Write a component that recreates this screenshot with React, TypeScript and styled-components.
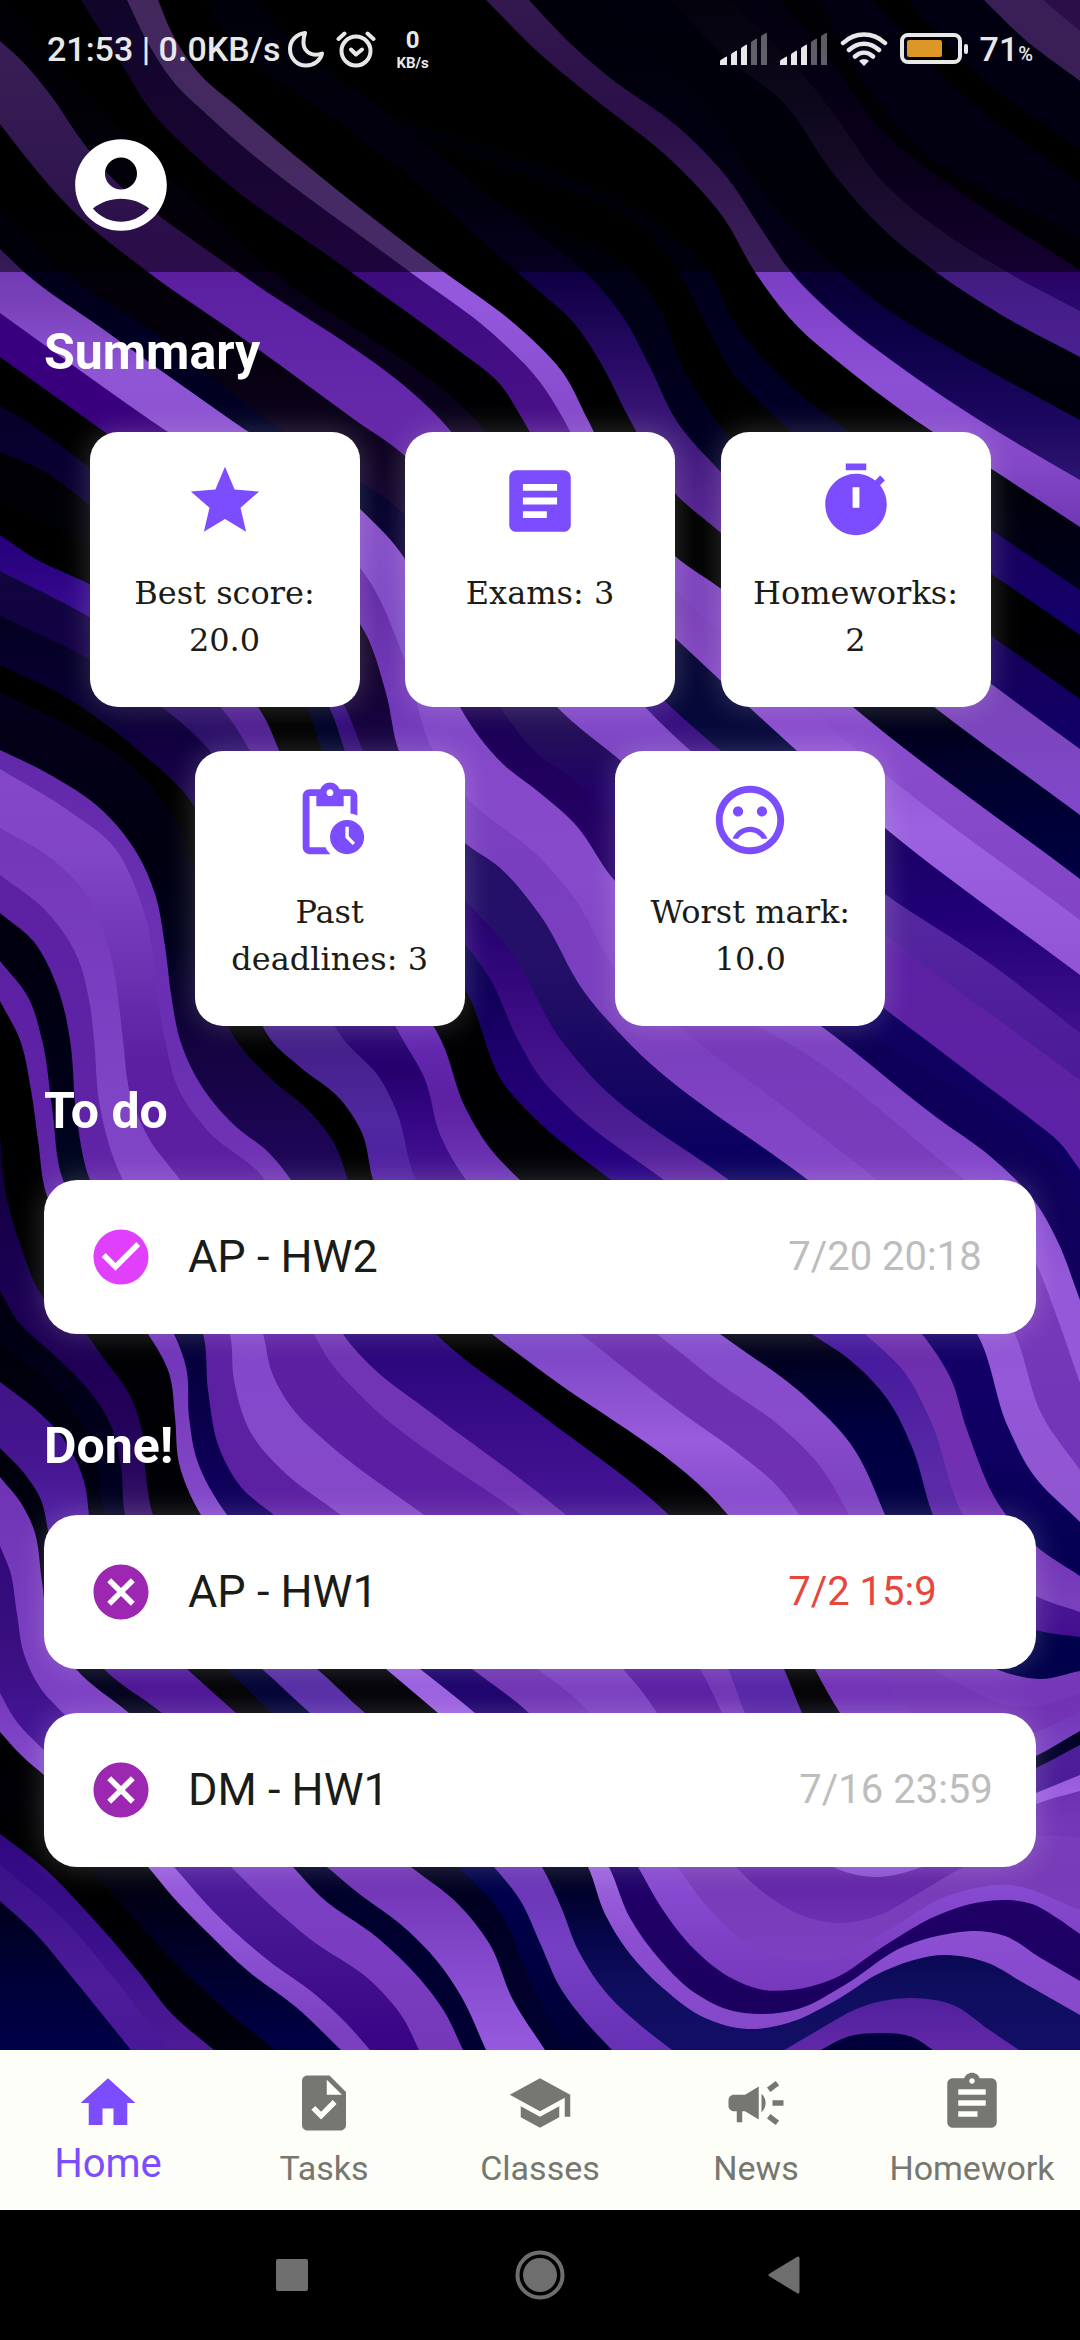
import React from "react";
import styled, { createGlobalStyle } from "styled-components";

const GlobalStyle = createGlobalStyle`
  *, *::before, *::after { box-sizing: border-box; }
  body { margin: 0; background: #000; font-family: Roboto, "Noto Sans", sans-serif; }
  button { font: inherit; border: 0; padding: 0; margin: 0; background: none; cursor: pointer; }
  h2, p, ul { margin: 0; padding: 0; }
`;

/* ---------- wallpaper ---------- */

type Point = [number, number];
type Stop = [number, string];
type Band = { edge: Point[]; shades: Stop[] };

/* Each band fills everything to the lower left of its edge; later bands cover earlier ones. */
const bands: Band[] = [
  { edge: [[1043, 0], [1080, 31]], shades: [[0, "#7a42b5"]] },
  { edge: [[984, 0], [1022, 37], [1080, 81]], shades: [[0, "#000024"]] },
  { edge: [[908, 0], [964, 63], [1080, 150]], shades: [[0, "#000004"]] },
  { edge: [[874, 0], [950, 83], [1080, 183]], shades: [[0, "#060022"]] },
  { edge: [[820, 0], [850, 60], [919, 147], [1080, 237]], shades: [[0, "#00000c"]] },
  { edge: [[780, 0], [822, 50], [884, 133], [953, 187], [1080, 270]], shades: [[0, "#080020"], [180, "#14003a"], [260, "#2c0060"], [310, "#280a70"]] },
  { edge: [[730, 0], [802, 73], [836, 117], [884, 183], [936, 227], [1007, 272], [1080, 311]], shades: [[0, "#08061c"], [100, "#1c1038"], [220, "#3c1c68"], [290, "#441c86"], [350, "#4a2090"]] },
  { edge: [[671, 0], [729, 60], [781, 100], [833, 173], [884, 230], [936, 272], [1005, 317], [1080, 357]], shades: [[0, "#00001a"], [420, "#00000c"]] },
  { edge: [[600, 0], [700, 100], [780, 215], [840, 272], [884, 307], [953, 350], [1080, 420]], shades: [[0, "#000014"], [270, "#080030"], [320, "#0a0042"], [420, "#1c0760"], [480, "#2c1570"]] },
  { edge: [[529, 0], [540, 12], [574, 47], [609, 77], [678, 127], [729, 180], [760, 227], [791, 272], [843, 323], [895, 363], [979, 420], [1080, 480]], shades: [[0, "#6a34a4"], [120, "#5a2096"], [220, "#7038b0"], [290, "#7d40c8"], [380, "#8c50d5"], [460, "#8448c8"], [527, "#7038b4"]] },
  { edge: [[486, 0], [540, 54], [592, 97], [674, 163], [723, 217], [755, 272], [798, 327], [836, 360], [915, 420], [990, 468], [1080, 527]], shades: [[0, "#000000"], [420, "#000000"], [600, "#00001c"]] },
  { edge: [[540, 165], [640, 212], [710, 272], [733, 320], [781, 377], [833, 420], [905, 470], [990, 529], [1080, 590]], shades: [[0, "#00000c"], [300, "#00001c"], [430, "#000028"], [540, "#18005c"], [620, "#14006a"]] },
  { edge: [[540, 180], [640, 225], [678, 272], [702, 317], [733, 373], [778, 420], [880, 500], [990, 573], [1080, 635]], shades: [[0, "#000000"], [600, "#000000"], [700, "#000008"]] },
  { edge: [[540, 222], [633, 272], [664, 317], [678, 357], [716, 420], [850, 535], [990, 635], [1080, 699]], shades: [[0, "#000010"], [300, "#000016"], [440, "#000022"], [640, "#160058"], [760, "#12006a"]] },
  { edge: [[255, 0], [296, 43], [379, 107], [540, 236], [585, 272], [623, 317], [650, 367], [676, 420], [720, 471], [860, 585], [990, 683], [1080, 749]], shades: [[0, "#020016"], [200, "#04001c"], [280, "#100046"], [370, "#2a0c68"], [430, "#3c1878"], [500, "#50208c"], [700, "#7a44ba"], [800, "#8048c8"]] },
  { edge: [[205, 0], [234, 50], [293, 90], [413, 180], [517, 272], [540, 292], [574, 323], [599, 360], [630, 420], [672, 490], [720, 532], [934, 707], [1080, 815]], shades: [[0, "#000000"], [560, "#000000"], [680, "#00000c"], [760, "#000028"], [880, "#000044"]] },
  { edge: [[158, 0], [172, 33], [196, 70], [241, 110], [444, 272], [510, 320], [540, 347], [561, 370], [588, 420], [630, 505], [675, 556], [720, 588], [853, 707], [1080, 879]], shades: [[0, "#8c54c4"], [150, "#9058cc"], [300, "#9458de"], [430, "#8448c8"], [600, "#7c44bc"], [740, "#884ccc"], [920, "#8244c4"]] },
  { edge: [[127, 0], [148, 43], [172, 80], [213, 120], [410, 272], [492, 333], [540, 382], [564, 420], [615, 530], [675, 590], [807, 707], [885, 774], [1080, 920]], shades: [[0, "#240c58"], [150, "#340c68"], [300, "#3e0c80"], [410, "#481088"], [600, "#7840b4"], [720, "#884ccc"], [830, "#9c62e0"], [960, "#9255d6"]] },
  { edge: [[81, 0], [127, 73], [148, 107], [200, 160], [351, 272], [458, 350], [499, 383], [523, 420], [590, 560], [675, 638], [749, 707], [885, 828], [1080, 975]], shades: [[0, "#000000"], [440, "#000004"], [640, "#080834"], [740, "#06083c"], [830, "#180062"], [920, "#220078"], [1030, "#40108c"]] },
  { edge: [[60, 70], [275, 273], [475, 420], [590, 610], [671, 707], [721, 751], [885, 894], [988, 962], [1080, 1033]], shades: [[0, "#04000c"], [420, "#0a001c"], [700, "#381080"], [800, "#421488"], [900, "#5528a0"], [1060, "#4c1b98"]] },
  { edge: [[0, 41], [21, 60], [52, 97], [79, 137], [117, 183], [158, 215], [238, 272], [441, 420], [560, 600], [645, 707], [740, 795], [885, 934], [1026, 1040], [1080, 1080]], shades: [[40, "#7440b0"], [150, "#6a34a8"], [250, "#581c98"], [290, "#5c20a3"], [400, "#6428aa"], [450, "#6428a8"], [720, "#8048c8"], [820, "#7540b8"], [960, "#5c20a3"], [1170, "#5e22a6"]] },
  { edge: [[0, 124], [28, 160], [69, 207], [148, 272], [241, 337], [355, 420], [405, 456], [475, 560], [557, 707], [621, 761], [740, 870], [885, 1009], [926, 1040], [988, 1087], [1032, 1120], [1060, 1143], [1080, 1170]], shades: [[120, "#000000"], [350, "#04000c"], [460, "#100424"], [600, "#180640"], [730, "#241058"], [800, "#200068"], [1000, "#100060"], [1250, "#0e0060"]] },
  { edge: [[0, 207], [65, 272], [155, 333], [258, 413], [360, 481], [405, 515], [455, 620], [500, 707], [540, 756], [574, 780], [615, 823], [740, 920], [880, 1040], [990, 1110], [1060, 1170], [1080, 1210]], shades: [[200, "#00000e"], [330, "#000020"], [480, "#000028"], [600, "#14003c"], [740, "#1d0058"], [860, "#270068"], [1050, "#0e0058"], [1300, "#10005c"]] },
  { edge: [[0, 249], [24, 272], [100, 327], [231, 420], [360, 509], [405, 559], [435, 640], [460, 707], [503, 764], [540, 793], [574, 823], [615, 881], [700, 945], [821, 1026], [936, 1117], [991, 1157], [1036, 1203], [1057, 1240], [1080, 1300]], shades: [[250, "#6c34b0"], [300, "#7840b8"], [370, "#8f55d5"], [520, "#8850c8"], [650, "#7a48c4"], [760, "#8448c8"], [880, "#864acb"], [1010, "#7b42c0"], [1100, "#7f44c5"], [1180, "#8448cc"], [1280, "#9458d8"]] },
  { edge: [[0, 313], [150, 420], [270, 500], [360, 568], [405, 661], [433, 751], [465, 796], [540, 858], [574, 898], [615, 968], [700, 1000], [783, 1040], [965, 1180], [1010, 1215], [1036, 1263], [1057, 1317], [1080, 1383]], shades: [[1000, "#7538b8"], [1180, "#7a3ebc"], [1400, "#7436b8"]] },
  { edge: [[0, 313], [150, 420], [270, 500], [360, 568], [405, 661], [433, 751], [465, 796], [540, 858], [574, 898], [615, 968], [695, 1040], [780, 1104], [877, 1180], [970, 1255], [1015, 1334], [1043, 1417], [1080, 1470]], shades: [[310, "#380080"], [420, "#38007c"], [570, "#6028a4"], [700, "#7038b8"], [780, "#7840c0"], [900, "#7a3ec0"], [1060, "#7b40be"], [1120, "#8044c4"], [1200, "#8448c8"], [1380, "#9458d8"], [1500, "#9055d0"]] },
  { edge: [[0, 357], [88, 420], [200, 500], [300, 570], [360, 624], [386, 693], [399, 751], [430, 805], [465, 843], [499, 867], [540, 915], [585, 993], [626, 1040], [808, 1180], [900, 1250], [977, 1334], [1008, 1427], [1032, 1473], [1080, 1522]], shades: [[350, "#000000"], [520, "#000004"], [660, "#14042c"], [760, "#180248"], [870, "#241068"], [960, "#241068"], [1060, "#180862"], [1160, "#0a0060"], [1350, "#140068"], [1460, "#0e0060"], [1540, "#060054"]] },
  { edge: [[0, 406], [24, 420], [89, 467], [240, 600], [345, 707], [363, 751], [410, 840], [465, 900], [510, 950], [561, 1040], [592, 1077], [729, 1180], [840, 1260], [922, 1334], [950, 1377], [967, 1430], [1006, 1515], [1036, 1546], [1080, 1576]], shades: [[410, "#06002a"], [500, "#0c0034"], [700, "#38107c"], [760, "#300c74"], [910, "#22006c"], [1020, "#3c0c85"], [1130, "#4c1f95"], [1180, "#6028a4"], [1400, "#7030b0"], [1540, "#7030b4"], [1600, "#7840bc"]] },
  { edge: [[0, 452], [45, 472], [89, 505], [230, 620], [329, 707], [345, 751], [395, 870], [465, 944], [489, 977], [518, 1040], [540, 1077], [568, 1107], [664, 1180], [780, 1265], [865, 1334], [905, 1373], [929, 1417], [963, 1515], [1000, 1570], [1036, 1596], [1080, 1612]], shades: [[450, "#000004"], [600, "#00000c"], [730, "#000228"], [930, "#08084c"], [1000, "#12005c"], [1070, "#200070"], [1160, "#240080"], [1340, "#44189c"], [1480, "#5a2aa8"], [1630, "#441090"]] },
  { edge: [[0, 500], [89, 545], [220, 630], [306, 707], [322, 751], [380, 890], [465, 989], [506, 1087], [540, 1123], [611, 1180], [720, 1260], [812, 1334], [850, 1360], [888, 1400], [912, 1447], [933, 1515], [975, 1595], [1036, 1630], [1080, 1637]], shades: [[490, "#000000"], [1130, "#000004"], [1340, "#000018"], [1430, "#000040"], [1600, "#00004a"], [1680, "#00004c"]] },
  { edge: [[0, 535], [34, 558], [89, 584], [190, 650], [258, 707], [285, 765], [340, 900], [410, 990], [441, 1040], [465, 1107], [489, 1147], [520, 1180], [620, 1260], [720, 1334], [809, 1400], [850, 1443], [885, 1515], [915, 1600], [955, 1645], [996, 1669], [1039, 1679], [1080, 1671]], shades: [[535, "#240078"], [600, "#34088c"], [720, "#502090"], [900, "#5420a0"], [1040, "#6428b0"], [1100, "#5c20a3"], [1170, "#6c34b4"], [1340, "#844ccc"], [1420, "#884ccc"], [1510, "#7a40c0"], [1700, "#7638b8"]] },
  { edge: [[0, 571], [89, 617], [160, 665], [220, 707], [255, 760], [300, 880], [370, 980], [403, 1040], [424, 1077], [441, 1137], [466, 1180], [560, 1262], [657, 1334], [719, 1383], [781, 1427], [815, 1460], [849, 1515], [885, 1610], [933, 1669], [970, 1689], [1005, 1705], [1029, 1707], [1080, 1693]], shades: [[571, "#10063c"], [660, "#140048"], [720, "#2c1068"], [1000, "#34107c"], [1070, "#26006c"], [1130, "#38088a"], [1178, "#441490"], [1340, "#6c30b0"], [1500, "#7030b4"], [1720, "#7234b4"]] },
  { edge: [[0, 616], [89, 659], [162, 707], [215, 757], [260, 880], [310, 980], [344, 1040], [379, 1077], [396, 1110], [416, 1180], [480, 1255], [581, 1334], [678, 1410], [747, 1460], [778, 1487], [799, 1515], [835, 1600], [874, 1669], [930, 1725], [980, 1745], [1036, 1732], [1080, 1711]], shades: [[616, "#030020"], [690, "#080030"], [760, "#140044"], [940, "#301868"], [1050, "#44208a"], [1120, "#5028a0"], [1180, "#5020a0"], [1340, "#7a44c4"], [1440, "#985cdc"], [1510, "#8448cc"], [1690, "#7030b4"], [1740, "#7840c0"]] },
  { edge: [[0, 665], [62, 695], [138, 750], [190, 800], [230, 920], [255, 1010], [271, 1040], [300, 1067], [341, 1100], [362, 1133], [373, 1180], [410, 1262], [492, 1334], [540, 1370], [728, 1515], [785, 1600], [815, 1669], [840, 1713], [890, 1780], [940, 1790], [1036, 1756], [1080, 1731]], shades: [[660, "#000000"], [1700, "#000004"], [1750, "#04042c"]] },
  { edge: [[0, 693], [52, 717], [138, 772], [172, 815], [194, 867], [210, 960], [236, 1040], [269, 1077], [310, 1112], [334, 1143], [348, 1180], [378, 1265], [436, 1334], [540, 1414], [669, 1515], [745, 1600], [784, 1669], [802, 1713], [850, 1795], [920, 1810], [1036, 1768], [1080, 1745]], shades: [[690, "#05001c"], [850, "#000010"], [940, "#00001c"], [1050, "#140340"], [1160, "#1e0658"], [1340, "#280678"], [1420, "#380c88"], [1510, "#441494"], [1690, "#5624a8"], [1790, "#4a1c94"]] },
  { edge: [[0, 750], [45, 772], [103, 811], [138, 855], [155, 894], [165, 946], [172, 1001], [180, 1040], [196, 1077], [234, 1125], [269, 1153], [291, 1180], [318, 1262], [343, 1334], [372, 1367], [430, 1412], [540, 1494], [566, 1515], [665, 1590], [728, 1669], [745, 1713], [800, 1800], [870, 1840], [940, 1838], [1036, 1793], [1080, 1775]], shades: [[750, "#6228aa"], [900, "#6a30b2"], [1050, "#6a2eb2"], [1170, "#7034b4"], [1400, "#7034b4"], [1700, "#7034b4"], [1790, "#9c60e0"], [1880, "#8a50d0"]] },
  { edge: [[0, 769], [69, 811], [114, 847], [138, 894], [152, 946], [157, 993], [165, 1040], [179, 1090], [207, 1130], [265, 1180], [290, 1262], [314, 1334], [331, 1363], [358, 1393], [522, 1515], [625, 1590], [700, 1669], [722, 1713], [765, 1805], [833, 1867], [857, 1875], [877, 1877], [922, 1867], [985, 1832], [1036, 1804], [1080, 1791]], shades: [[769, "#8547cb"], [860, "#8044c6"], [980, "#6a30b0"], [1060, "#5c1fa2"], [1450, "#5c1fa3"], [1700, "#5a1ea2"], [1830, "#7438b8"], [1880, "#6024a6"], [1920, "#6e30b2"]] },
  { edge: [[0, 828], [52, 859], [86, 894], [107, 942], [120, 1013], [123, 1040], [131, 1097], [148, 1137], [180, 1180], [230, 1260], [263, 1334], [272, 1373], [296, 1413], [324, 1440], [424, 1515], [540, 1600], [623, 1669], [657, 1713], [690, 1800], [736, 1867], [774, 1900], [809, 1918], [840, 1923], [877, 1916], [919, 1893], [963, 1867], [1036, 1836], [1080, 1837]], shades: [[828, "#7336b8"], [1000, "#7a3ec2"], [1110, "#8044c6"], [1180, "#8044c6"], [1400, "#8448cc"], [1510, "#8448c8"], [1690, "#7a40c0"], [1880, "#783cb8"], [1960, "#7c40c0"]] },
  { edge: [[0, 875], [45, 910], [76, 954], [90, 1005], [94, 1040], [100, 1107], [123, 1180], [190, 1260], [230, 1334], [234, 1380], [251, 1433], [282, 1470], [341, 1515], [450, 1600], [538, 1669], [590, 1713], [630, 1790], [678, 1867], [705, 1904], [747, 1943], [781, 1957], [822, 1961], [880, 1935], [950, 1895], [1010, 1885], [1080, 1910]], shades: [[875, "#5c20a3"], [1180, "#6024a6"], [1340, "#5c20a3"], [1500, "#5c20a3"], [1700, "#7034b4"], [1890, "#864ad0"], [1990, "#7638bc"]] },
  { edge: [[0, 913], [34, 942], [55, 981], [65, 1013], [70, 1040], [77, 1120], [90, 1180], [155, 1260], [203, 1334], [208, 1390], [220, 1450], [241, 1487], [274, 1515], [380, 1600], [472, 1669], [529, 1713], [590, 1790], [638, 1867], [661, 1907], [695, 1950], [733, 1979], [764, 1990], [791, 1990], [833, 1979], [884, 1946], [936, 1916], [981, 1902], [1008, 1900], [1032, 1904], [1057, 1918], [1080, 1934]], shades: [[913, "#00000e"], [1100, "#000018"], [1180, "#000824"], [1340, "#040038"], [1420, "#0a004c"], [1510, "#120060"], [1700, "#1c006c"], [1880, "#200068"], [2000, "#1c0060"]] },
  { edge: [[0, 961], [28, 997], [42, 1040], [52, 1107], [63, 1180], [120, 1260], [174, 1334], [186, 1367], [189, 1417], [196, 1457], [227, 1515], [330, 1600], [420, 1669], [475, 1713], [550, 1782], [609, 1867], [630, 1918], [661, 1961], [695, 1993], [733, 2011], [760, 2014], [798, 2009], [843, 1986], [905, 1946], [953, 1933], [974, 1931], [1005, 1936], [1039, 1957], [1080, 1981]], shades: [[961, "#5c20a3"], [1100, "#5f22a6"], [1180, "#6028a8"], [1340, "#7034b8"], [1440, "#7c40c0"], [1510, "#844acc"], [1690, "#9a60e0"], [1880, "#9a60dc"], [1950, "#8a4cd0"], [2030, "#8448c8"]] },
  { edge: [[0, 1001], [20, 1040], [31, 1090], [38, 1140], [46, 1193], [90, 1270], [148, 1334], [169, 1373], [175, 1417], [179, 1463], [201, 1515], [300, 1600], [386, 1669], [438, 1713], [520, 1782], [588, 1867], [605, 1914], [630, 1954], [664, 1989], [705, 2018], [747, 2029], [788, 2023], [833, 2002], [884, 1971], [946, 1955], [988, 1963], [1022, 1982], [1080, 2015]], shades: [[1000, "#000000"], [1720, "#000008"], [1880, "#000024"], [1940, "#06064c"], [1990, "#100e60"], [2050, "#120e66"]] },
  { edge: [[0, 1137], [5, 1190], [21, 1247], [43, 1297], [86, 1334], [107, 1363], [127, 1390], [141, 1427], [145, 1467], [153, 1515], [225, 1600], [317, 1669], [365, 1713], [470, 1792], [542, 1867], [561, 1907], [578, 1950], [609, 1996], [640, 2025], [672, 2050]], shades: [[1137, "#100038"], [1260, "#1a0050"], [1400, "#220058"], [1470, "#28085e"], [1515, "#381468"], [1690, "#562ca5"], [1870, "#6834b4"], [1950, "#7540c4"], [2050, "#6630b4"]] },
  { edge: [[0, 1290], [17, 1320], [52, 1353], [86, 1387], [110, 1423], [121, 1467], [125, 1515], [170, 1600], [262, 1669], [310, 1713], [425, 1800], [494, 1867], [520, 1900], [540, 1943], [561, 1989], [585, 2021], [612, 2050]], shades: [[1290, "#000010"], [1450, "#00001e"], [1690, "#000034"], [1900, "#00004c"], [2050, "#000034"]] },
  { edge: [[0, 1340], [50, 1385], [90, 1435], [105, 1515], [140, 1600], [226, 1669], [272, 1713], [390, 1805], [458, 1867], [500, 1912], [530, 1980], [565, 2050]], shades: [[1340, "#00000c"], [1520, "#000014"], [1690, "#000004"], [1870, "#000020"], [2000, "#00002c"]] },
  { edge: [[0, 1382], [34, 1408], [59, 1433], [76, 1460], [86, 1490], [89, 1515], [115, 1600], [187, 1669], [236, 1713], [335, 1805], [411, 1867], [458, 1904], [489, 1943], [513, 2000], [545, 2050]], shades: [[1382, "#401488"], [1460, "#451690"], [1515, "#5020a0"], [1690, "#4c1494"], [1880, "#7034b4"], [1960, "#8448cc"], [2040, "#9458dc"]] },
  { edge: [[0, 1448], [24, 1473], [41, 1500], [48, 1530], [62, 1610], [104, 1669], [162, 1713], [265, 1812], [327, 1867], [362, 1896], [399, 1923], [437, 1961], [461, 1996], [486, 2050]], shades: [[1448, "#00000c"], [1690, "#00001c"], [1880, "#00002c"], [2050, "#000034"]] },
  { edge: [[0, 1477], [21, 1503], [33, 1527], [42, 1582], [50, 1630], [76, 1669], [129, 1713], [230, 1805], [293, 1867], [320, 1896], [379, 1939], [420, 1979], [444, 2011], [463, 2050]], shades: [[1477, "#6e34b4"], [1560, "#7438ba"], [1690, "#7c40c4"], [1880, "#7a40c4"], [1970, "#7a3cc0"], [2050, "#7438b8"]] },
  { edge: [[0, 1546], [10, 1571], [17, 1614], [24, 1654], [41, 1689], [64, 1714], [150, 1792], [231, 1867], [269, 1904], [310, 1939], [372, 1982], [403, 2018], [419, 2050]], shades: [[1546, "#300878"], [1650, "#3a1080"], [1720, "#421494"], [1870, "#4e1c9c"], [1950, "#441490"], [2040, "#3a0486"]] },
  { edge: [[0, 1693], [14, 1718], [44, 1750], [110, 1802], [174, 1867], [213, 1911], [269, 1961], [317, 1996], [348, 2025], [370, 2050]], shades: [[1693, "#7438bc"], [1770, "#844acc"], [1870, "#985cdc"], [1930, "#9055d8"], [2030, "#7a40c0"]] },
  { edge: [[0, 1732], [21, 1755], [44, 1775], [98, 1820], [148, 1867], [172, 1896], [207, 1932], [248, 1971], [296, 2007], [341, 2050]], shades: [[1732, "#000000"], [1870, "#00000c"], [1930, "#000020"], [2040, "#000044"]] },
  { edge: [[0, 1780], [90, 1870], [172, 1960], [220, 2005], [275, 2050]], shades: [[1780, "#000006"], [1880, "#000000"], [2050, "#00000e"]] },
  { edge: [[0, 1834], [44, 1868], [86, 1911], [138, 1971], [172, 2014], [214, 2050]], shades: [[1834, "#300880"], [1950, "#3c108c"], [2040, "#4c1a94"]] },
  { edge: [[0, 1864], [69, 1925], [117, 1982], [169, 2050]], shades: [[1864, "#3a1088"], [1980, "#4c1c9a"], [2050, "#481898"]] },
  { edge: [[0, 1901], [34, 1932], [76, 1982], [131, 2050]], shades: [[1901, "#00001c"], [1980, "#000038"], [2050, "#000048"]] },
];

const crests: Band[] = [
  { edge: [[781, 2052], [815, 2032], [867, 2005], [912, 1998], [953, 2005], [988, 2029], [1022, 2052]], shades: [[1998, "#52209c"], [2050, "#6028a8"]] },
  { edge: [[817, 2052], [850, 2036], [879, 2033], [912, 2037], [936, 2052]], shades: [[2030, "#00003a"]] },
];

const distance = (a: Point, b: Point) => Math.hypot(b[0] - a[0], b[1] - a[1]);

/* Tangents are weighted by the distance to each neighbour, so uneven spacing stays free of ripples. */
const tangent = (points: Point[], i: number): Point => {
  const here = points[i];
  const before = points[i - 1];
  const after = points[i + 1];
  if (!before || !after) {
    const [a, b] = before ? [before, here] : [here, after];
    const d = distance(a, b);
    return [(b[0] - a[0]) / d, (b[1] - a[1]) / d];
  }
  const d1 = distance(before, here);
  const d2 = distance(here, after);
  const mix = (k: 0 | 1) =>
    (d2 * ((here[k] - before[k]) / d1) + d1 * ((after[k] - here[k]) / d2)) / (d1 + d2);
  return [mix(0), mix(1)];
};

const smooth = (points: Point[]) => {
  let d = `M${points[0][0]} ${points[0][1]}`;
  for (let i = 0; i < points.length - 1; i++) {
    const from = points[i];
    const to = points[i + 1];
    const reach = distance(from, to) / 3;
    const t1 = tangent(points, i);
    const t2 = tangent(points, i + 1);
    const c = [from[0] + t1[0] * reach, from[1] + t1[1] * reach, to[0] - t2[0] * reach, to[1] - t2[1] * reach];
    d += `C${c.map((v) => v.toFixed(1)).join(" ")} ${to[0]} ${to[1]}`;
  }
  return d;
};

const WallpaperArt = styled.svg`
  position: absolute;
  inset: 0;
  z-index: 0;
  width: 100%;
  height: 100%;
`;

const Shade = ({ id, shades }: { id: string; shades: Stop[] }) => {
  const top = shades[0][0];
  const bottom = Math.max(shades[shades.length - 1][0], top + 1);
  return (
    <linearGradient id={id} gradientUnits="userSpaceOnUse" x1="0" x2="0" y1={top} y2={bottom}>
      {shades.map(([y, color]) => (
        <stop key={y} offset={(y - top) / (bottom - top)} stopColor={color} />
      ))}
    </linearGradient>
  );
};

const Wallpaper = () => (
  <WallpaperArt viewBox="0 0 1080 2050" preserveAspectRatio="xMidYMin slice" aria-hidden="true">
    <defs>
      {bands.map((band, i) => <Shade key={i} id={`band-${i}`} shades={band.shades} />)}
      {crests.map((band, i) => <Shade key={i} id={`crest-${i}`} shades={band.shades} />)}
    </defs>
    <rect width="1080" height="2050" fill="#5a1f95" />
    {bands.map((band, i) => (
      <path key={i} d={`${smooth(band.edge)}h20V2100H-20V-20Z`} fill={`url(#band-${i})`} />
    ))}
    {crests.map((band, i) => (
      <path key={i} d={`${smooth(band.edge)}Z`} fill={`url(#crest-${i})`} />
    ))}
  </WallpaperArt>
);

/* ---------- icons ---------- */

const glyphs = {
  account: "M12 2C6.48 2 2 6.48 2 12s4.48 10 10 10 10-4.48 10-10S17.52 2 12 2zm0 4c1.93 0 3.5 1.57 3.5 3.5S13.93 13 12 13s-3.5-1.57-3.5-3.5S10.07 6 12 6zm0 14c-2.03 0-4.43-.82-6.14-2.88C7.55 15.8 9.68 15 12 15s4.45.8 6.14 2.12C16.43 19.18 14.03 20 12 20z",
  star: "M12 17.27 18.18 21l-1.64-7.03L22 9.24l-7.19-.61L12 2 9.19 8.63 2 9.24l5.46 4.73L5.82 21z",
  article: "M19 3H5c-1.1 0-2 .9-2 2v14c0 1.1.9 2 2 2h14c1.1 0 2-.9 2-2V5c0-1.1-.9-2-2-2zm-5 14H7v-2h7v2zm3-4H7v-2h10v2zm0-4H7V7h10v2z",
  timer: "M9 1h6v2H9zM19.03 7.39l1.42-1.42c-.43-.51-.9-.99-1.41-1.41l-1.42 1.42C16.07 4.74 14.12 4 12 4c-4.97 0-9 4.03-9 9s4.02 9 9 9 9-4.03 9-9c0-2.12-.74-4.07-1.97-5.61zM13 14h-2V8h2v6z",
  pending: "M17 12c-2.76 0-5 2.24-5 5s2.24 5 5 5 5-2.24 5-5-2.24-5-5-5zm1.65 7.35L16.5 17.2V14h1v2.79l1.85 1.85-.7.71zM18 3h-3.18C14.4 1.84 13.3 1 12 1s-2.4.84-2.82 2H6c-1.1 0-2 .9-2 2v15c0 1.1.9 2 2 2h6.11c-.59-.57-1.07-1.25-1.42-2H6V5h2v3h8V5h2v5.08c.71.1 1.38.31 2 .6V5c0-1.1-.9-2-2-2zm-6 2c-.55 0-1-.45-1-1s.45-1 1-1 1 .45 1 1-.45 1-1 1z",
  sad: "M15.5 8a1.5 1.5 0 1 0 0 3 1.5 1.5 0 0 0 0-3zM8.5 8a1.5 1.5 0 1 0 0 3 1.5 1.5 0 0 0 0-3zM12 14c-2.33 0-4.32 1.45-5.12 3.5h1.67c.69-1.19 1.97-2 3.45-2s2.75.81 3.45 2h1.67c-.8-2.05-2.79-3.5-5.12-3.5zm-.01-12C6.47 2 2 6.48 2 12s4.47 10 9.99 10C17.52 22 22 17.52 22 12S17.52 2 11.99 2zM12 20c-4.42 0-8-3.58-8-8s3.58-8 8-8 8 3.58 8 8-3.58 8-8 8z",
  check: "M12 2C6.48 2 2 6.48 2 12s4.48 10 10 10 10-4.48 10-10S17.52 2 12 2zm-2 15-5-5 1.41-1.41L10 14.17l7.59-7.59L19 8l-9 9z",
  cancel: "M12 2C6.47 2 2 6.47 2 12s4.47 10 10 10 10-4.47 10-10S17.53 2 12 2zm5 13.59L15.59 17 12 13.41 8.41 17 7 15.59 10.59 12 7 8.41 8.41 7 12 10.59 15.59 7 17 8.41 13.41 12 17 15.59z",
  home: "M10 20v-6h4v6h5v-8h3L12 3 2 12h3v8z",
  task: "M14 2H6c-1.1 0-2 .9-2 2v16c0 1.1.89 2 1.99 2H18c1.1 0 2-.9 2-2V8l-6-6zm-3.06 16L7.4 14.46l1.41-1.41 2.12 2.12 4.24-4.24 1.41 1.41L10.94 18zM13 9V3.5L18.5 9H13z",
  school: "M5 13.18v4L12 21l7-3.82v-4L12 17l-7-3.82zM12 3 1 9l11 6 9-4.91V17h2V9L12 3z",
  campaign: "M18 11v2h4v-2h-4zM16 17.61c.96.71 2.21 1.65 3.2 2.39.4-.53.8-1.07 1.2-1.6-.99-.74-2.24-1.68-3.2-2.4-.4.54-.8 1.08-1.2 1.61zM20.4 5.6c-.4-.53-.8-1.07-1.2-1.6-.99.74-2.24 1.68-3.2 2.4.4.53.8 1.07 1.2 1.6.96-.72 2.21-1.65 3.2-2.4zM4 9c-1.1 0-2 .9-2 2v2c0 1.1.9 2 2 2h1v4h2v-4h1l5 3V6L8 9H4zM15.5 12c0-1.33-.58-2.53-1.5-3.35v6.69c.92-.81 1.5-2.01 1.5-3.34z",
  assignment: "M19 3h-4.18C14.4 1.84 13.3 1 12 1s-2.4.84-2.82 2H5c-1.1 0-2 .9-2 2v14c0 1.1.9 2 2 2h14c1.1 0 2-.9 2-2V5c0-1.1-.9-2-2-2zm-7 0c.55 0 1 .45 1 1s-.45 1-1 1-1-.45-1-1 .45-1 1-1zm2 14H7v-2h7v2zm3-4H7v-2h10v2zm0-4H7V7h10v2z",
};

type GlyphName = keyof typeof glyphs;

const IconSvg = styled.svg<{ $size: number; $color?: string }>`
  display: block;
  flex: none;
  width: ${(p) => p.$size}px;
  height: ${(p) => p.$size}px;
  fill: ${(p) => p.$color ?? "currentColor"};
`;

const Icon = ({ name, size, color }: { name: GlyphName; size: number; color?: string }) => (
  <IconSvg viewBox="0 0 24 24" $size={size} $color={color} aria-hidden="true">
    <path d={glyphs[name]} fillRule="evenodd" />
  </IconSvg>
);

/* ---------- status bar ---------- */

const StatusRow = styled.div`
  display: flex;
  align-items: center;
  justify-content: space-between;
  height: 98px;
  padding: 0 47px;
  color: #e8e8e8;
`;

const StatusGroup = styled.div`
  display: flex;
  align-items: center;
  gap: 12px;
`;

const StatusText = styled.span`
  font-size: 34px;
  line-height: 40px;
  font-weight: 500;
`;

const Clock = styled(StatusText)`
  margin-right: -4px;
`;

const Speed = styled.span`
  display: flex;
  flex-direction: column;
  align-items: center;
  margin-left: 8px;
  font-weight: 700;
`;

const SpeedValue = styled.span`
  font-size: 24px;
  line-height: 28px;
`;

const SpeedUnit = styled.span`
  font-size: 15px;
  line-height: 18px;
`;

const Percent = styled.small`
  font-size: 20px;
  line-height: 20px;
  font-weight: 500;
`;

const StatusArt = styled.svg`
  display: block;
  flex: none;
`;

const Signal = () => (
  <StatusArt width="48" height="32" viewBox="0 0 48 32" fill="#e8e8e8" aria-hidden="true">
    <path d="M0 32v-3.500q0-1 1-1.800l5-3q1-.7 1 .5V32z" />
    <path d="M11 32V22q0-1 1-1.700l4-2.500q1-.6 1 .5V32z" />
    <path d="M21 32V16q0-1 1-1.700l4-2.500q1-.6 1 .5V32z" />
    <path d="M31 32V10q0-1 1-1.700l4-2.500q1-.6 1 .5V32z" opacity=".4" />
    <path d="M41 32V4q0-1 1-1.700l4-2.200q1-.6 1 .5V32z" opacity=".4" />
  </StatusArt>
);

const StatusBar = () => (
  <StatusRow>
    <StatusGroup>
      <Clock>21:53 | 0.0KB/s</Clock>
      <StatusArt width="36" height="38" viewBox="0 0 36 38" fill="none" stroke="#e8e8e8" strokeWidth="4" strokeLinejoin="round" aria-hidden="true">
        <path d="M17 3C8 4 2 11 2 19c0 9.500 7 16.500 16 16.500 8 0 14.500-5 16-12-9 3.500-18-1-18.500-10-.2-4 .5-7.500 1.500-10.500z" />
      </StatusArt>
      <StatusArt width="40" height="38" viewBox="0 0 40 38" fill="none" stroke="#e8e8e8" strokeWidth="4" strokeLinecap="round" strokeLinejoin="round" aria-hidden="true">
        <circle cx="20" cy="21" r="14.500" />
        <path d="M15 19.500l5 5 6-5M2.500 9l6-5.500M37.500 9l-6-5.500" />
      </StatusArt>
      <Speed>
        <SpeedValue>0</SpeedValue>
        <SpeedUnit>KB/s</SpeedUnit>
      </Speed>
    </StatusGroup>
    <StatusGroup>
      <Signal />
      <Signal />
      <StatusArt width="48" height="36" viewBox="0 0 48 36" fill="none" stroke="#e8e8e8" strokeWidth="4.500" strokeLinecap="round" aria-hidden="true">
        <path d="M3 12c12-11.500 30-11.500 42 0M9 19c9-8.500 21-8.500 30 0M15 25.500c5.500-5 12.500-5 18 0" />
        <path d="M24 35l-5-5c2.500-2.700 7.500-2.700 10 0z" fill="#e8e8e8" stroke="none" />
      </StatusArt>
      <StatusArt width="68" height="32" viewBox="0 0 68 32" aria-hidden="true">
        <rect x="2" y="2" width="58" height="27" rx="6" fill="none" stroke="#e8e8e8" strokeWidth="4" />
        <rect x="7" y="7" width="35" height="17" rx="2" fill="#dc9726" />
        <rect x="64" y="11" width="4" height="10" rx="2" fill="#e8e8e8" />
      </StatusArt>
      <StatusText>71<Percent>%</Percent></StatusText>
    </StatusGroup>
  </StatusRow>
);

/* ---------- page ---------- */

const Page = styled.div`
  display: flex;
  flex-direction: column;
  min-height: 100vh;
`;

const Screen = styled.div`
  position: relative;
  flex: 1;
  overflow: hidden;
`;

const Content = styled.div`
  position: relative;
  z-index: 1;
`;

const TopBar = styled.header`
  background: rgba(0, 0, 0, 0.52);
`;

const ProfileRow = styled.div`
  display: flex;
  padding: 32px 66px;
`;

const ProfileButton = styled.button`
  color: #fff;
`;

const Main = styled.main`
  padding: 50px 44px 64px;
`;

const Heading = styled.h2`
  color: #fff;
  font-size: 50px;
  line-height: 60px;
  font-weight: 700;
`;

const SummaryGrid = styled.ul`
  display: flex;
  flex-wrap: wrap;
  justify-content: space-evenly;
  row-gap: 44px;
  padding: 50px 0 55px;
  list-style: none;
`;

const glow = "0 0 30px rgba(255, 255, 255, 0.2)";

const SummaryCard = styled.li`
  display: flex;
  flex-direction: column;
  align-items: center;
  gap: 28px;
  width: 270px;
  min-height: 275px;
  padding: 28px 26px;
  border-radius: 28px;
  background: #fff;
  box-shadow: ${glow};
`;

const SummaryText = styled.p`
  color: #1c1c17;
  font-family: "DejaVu Serif", serif;
  font-size: 32px;
  line-height: 47px;
  text-align: center;
`;

const TaskList = styled.ul`
  display: flex;
  flex-direction: column;
  gap: 44px;
  padding: 39px 0 82px;
  list-style: none;
`;

const TaskRow = styled.li`
  display: flex;
  align-items: center;
  height: 154px;
  padding: 0 44px;
  border-radius: 33px;
  background: #fff;
  box-shadow: ${glow};
  white-space: nowrap;
`;

const TaskName = styled.span`
  margin-left: 34px;
  color: #1b1c18;
  font-size: 45px;
  line-height: 54px;
`;

const TaskDue = styled.time<{ $late?: boolean }>`
  margin-left: 38vw;
  color: ${(p) => (p.$late ? "#e8453c" : "#bdbdbd")};
  font-size: 40px;
  line-height: 48px;
`;

const BottomNav = styled.nav`
  display: grid;
  grid-template-columns: repeat(5, 1fr);
  height: 160px;
  background: #fdfef7;
`;

const NavButton = styled.button<{ $active?: boolean }>`
  display: flex;
  flex-direction: column;
  align-items: center;
  gap: 6px;
  padding-top: 20px;
  color: ${(p) => (p.$active ? "#7c4dff" : "#757770")};
`;

const NavLabel = styled.span<{ $active?: boolean }>`
  font-size: ${(p) => (p.$active ? 40 : 34)}px;
  line-height: ${(p) => (p.$active ? 44 : 52)}px;
`;

const SystemNav = styled.nav`
  display: grid;
  grid-template-columns: repeat(3, 1fr);
  align-items: center;
  height: 130px;
  padding: 0 168px;
  background: #000;
`;

const SystemButton = styled.button`
  display: flex;
  justify-content: center;
`;

const summary: { icon: GlyphName; text: string }[] = [
  { icon: "star", text: "Best score: 20.0" },
  { icon: "article", text: "Exams: 3" },
  { icon: "timer", text: "Homeworks: 2" },
  { icon: "pending", text: "Past deadlines: 3" },
  { icon: "sad", text: "Worst mark: 10.0" },
];

type Task = { name: string; due: string; late?: boolean };

const todo: Task[] = [{ name: "AP - HW2", due: "7/20 20:18" }];
const done: Task[] = [
  { name: "AP - HW1", due: "7/2 15:9", late: true },
  { name: "DM - HW1", due: "7/16 23:59" },
];

const tabs: { icon: GlyphName; label: string }[] = [
  { icon: "home", label: "Home" },
  { icon: "task", label: "Tasks" },
  { icon: "school", label: "Classes" },
  { icon: "campaign", label: "News" },
  { icon: "assignment", label: "Homework" },
];

const MarkButton = styled.button`
  flex: none;
`;

const Tasks = ({ items, icon, color, action }: { items: Task[]; icon: GlyphName; color: string; action: string }) => (
  <TaskList>
    {items.map((task) => (
      <TaskRow key={task.name}>
        <MarkButton type="button" aria-label={`${action} ${task.name}`}>
          <Icon name={icon} size={66} color={color} />
        </MarkButton>
        <TaskName>{task.name}</TaskName>
        <TaskDue $late={task.late}>{task.due}</TaskDue>
      </TaskRow>
    ))}
  </TaskList>
);

export default function App() {
  return (
    <Page>
      <GlobalStyle />
      <Screen>
        <Wallpaper />
        <Content>
          <TopBar>
            <StatusBar />
            <ProfileRow>
              <ProfileButton type="button" aria-label="Profile">
                <Icon name="account" size={110} />
              </ProfileButton>
            </ProfileRow>
          </TopBar>
          <Main>
            <Heading>Summary</Heading>
            <SummaryGrid>
              {summary.map((item) => (
                <SummaryCard key={item.icon}>
                  <Icon name={item.icon} size={82} color="#7c4dff" />
                  <SummaryText>{item.text}</SummaryText>
                </SummaryCard>
              ))}
            </SummaryGrid>
            <Heading>To do</Heading>
            <Tasks items={todo} icon="check" color="#e040fb" action="Complete" />
            <Heading>Done!</Heading>
            <Tasks items={done} icon="cancel" color="#9c27b0" action="Reopen" />
          </Main>
        </Content>
      </Screen>
      <BottomNav aria-label="Sections">
        {tabs.map((tab, i) => (
          <NavButton key={tab.label} type="button" $active={i === 0}>
            <Icon name={tab.icon} size={66} />
            <NavLabel $active={i === 0}>{tab.label}</NavLabel>
          </NavButton>
        ))}
      </BottomNav>
      <SystemNav aria-label="System">
        <SystemButton type="button" aria-label="Recent apps">
          <StatusArt width="50" height="50" viewBox="0 0 50 50" aria-hidden="true">
            <rect x="9" y="9" width="32" height="32" rx="2" fill="#6e6e6e" />
          </StatusArt>
        </SystemButton>
        <SystemButton type="button" aria-label="Home screen">
          <StatusArt width="50" height="50" viewBox="0 0 50 50" aria-hidden="true">
            <circle cx="25" cy="25" r="22.500" fill="none" stroke="#6e6e6e" strokeWidth="4" />
            <circle cx="25" cy="25" r="17" fill="#6e6e6e" />
          </StatusArt>
        </SystemButton>
        <SystemButton type="button" aria-label="Back">
          <StatusArt width="50" height="50" viewBox="0 0 50 50" aria-hidden="true">
            <path d="M7 25l28-17v34z" fill="#6e6e6e" stroke="#6e6e6e" strokeWidth="3" strokeLinejoin="round" />
          </StatusArt>
        </SystemButton>
      </SystemNav>
    </Page>
  );
}
